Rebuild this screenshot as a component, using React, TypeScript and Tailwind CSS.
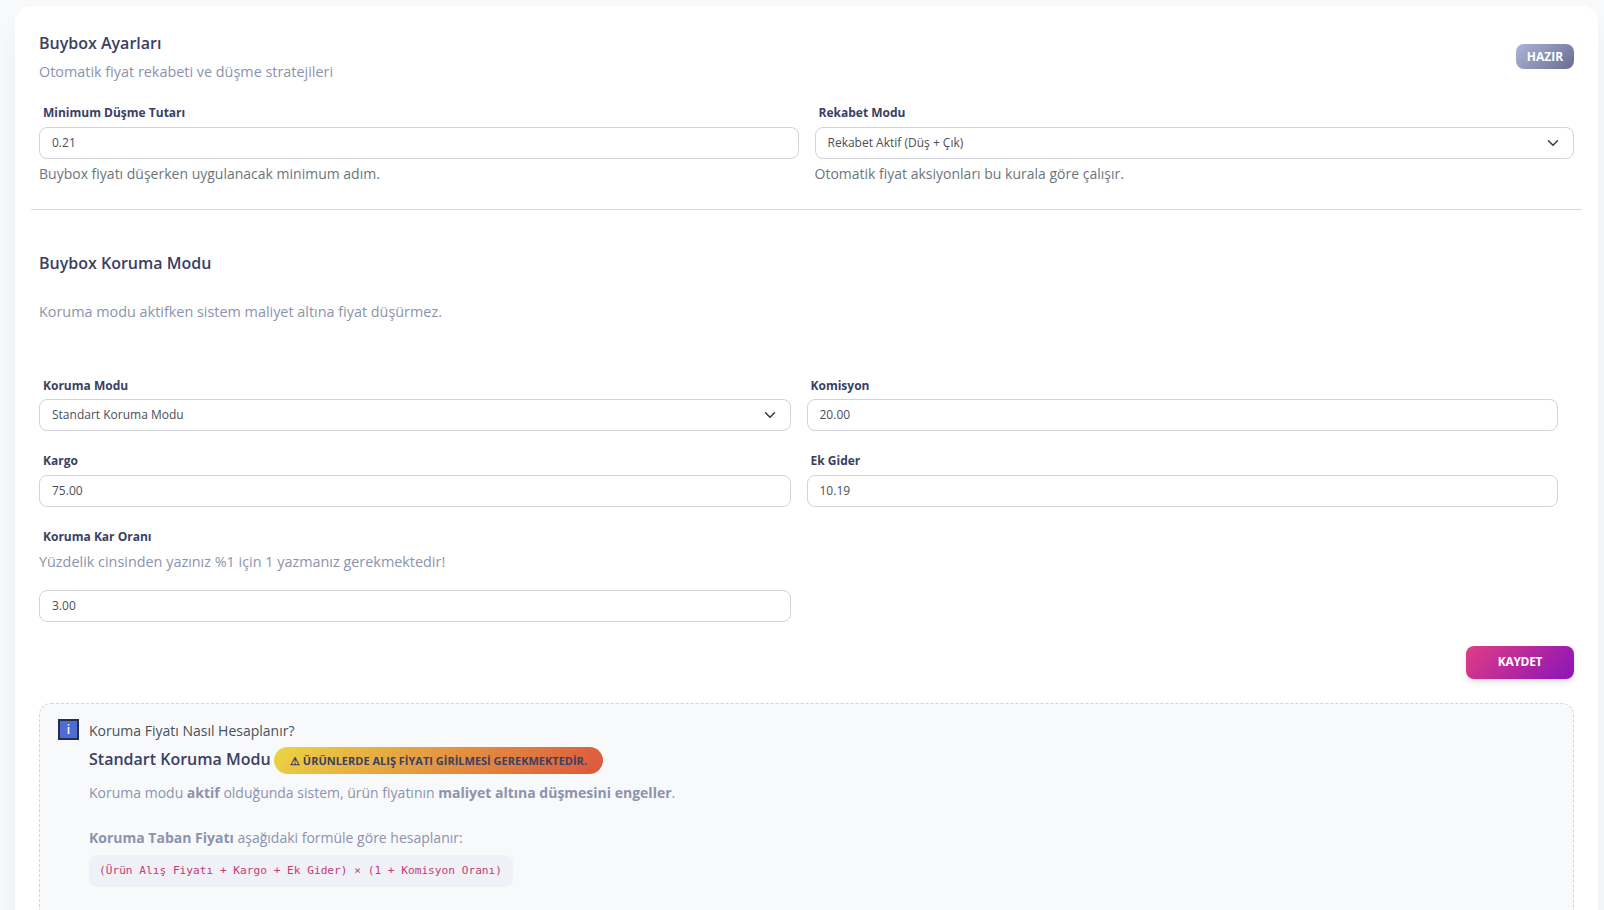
import type { ReactNode } from "react";

const fieldCls =
  "block h-8 w-full appearance-none rounded-lg border border-[#d2d3da] bg-white px-3 text-[12px] leading-[18px] text-[#495057] outline-none";

function Label({ children }: { children: ReactNode }) {
  return (
    <label className="ml-1 block pt-px text-[12px] leading-[17px] font-bold text-[#3a4063]">
      {children}
    </label>
  );
}

function TextInput({ value }: { value: string }) {
  return <input className={`${fieldCls} pb-0.5`} defaultValue={value} />;
}

function Select({ value }: { value: string }) {
  return (
    <div className="relative">
      <select className={fieldCls} defaultValue={value}>
        <option>{value}</option>
      </select>
      <svg
        className="pointer-events-none absolute top-2.5 right-[13px] h-3 w-4"
        viewBox="0 0 16 16"
        fill="none"
        stroke="#343a40"
        strokeWidth="2"
        strokeLinecap="round"
        strokeLinejoin="round"
      >
        <path d="m2 5 6 6 6-6" />
      </svg>
    </div>
  );
}

export default function App() {
  return (
    <div className="h-[910px] overflow-hidden bg-[#f8f9fa] pt-1.5 pr-1.5 pl-[15px] font-['Open_Sans',sans-serif]">
      <main className="h-[1100px] rounded-2xl bg-white px-6 pt-6 shadow-[0_20px_27px_0_rgba(0,0,0,0.05)]">
        <header className="flex items-start justify-between">
          <div>
            <h2 className="text-[16px] leading-[26px] font-semibold text-[#3a4063]">Buybox Ayarları</h2>
            <p className="mt-[5px] text-[14.4px] leading-[22px] text-[#8c93ac]">
              Otomatik fiyat rekabeti ve düşme stratejileri
            </p>
          </div>
          <span className="mt-3.5 flex h-[25px] w-[58px] items-center justify-center rounded-lg bg-linear-[135deg,#aeb4d8,#676e92] text-[12px] leading-none font-bold text-white">
            HAZIR
          </span>
        </header>

        <section className="mt-5 grid grid-cols-2 gap-4">
          <div>
            <Label>Minimum Düşme Tutarı</Label>
            <div className="mt-1.5">
              <TextInput value="0.21" />
            </div>
            <p className="mt-1 text-[14px] leading-[22px] text-[#6c757d]">
              Buybox fiyatı düşerken uygulanacak minimum adım.
            </p>
          </div>
          <div>
            <Label>Rekabet Modu</Label>
            <div className="mt-1.5">
              <Select value="Rekabet Aktif (Düş + Çık)" />
            </div>
            <p className="mt-1 text-[14px] leading-[22px] text-[#6c757d]">
              Otomatik fiyat aksiyonları bu kurala göre çalışır.
            </p>
          </div>
        </section>

        <hr className="-mx-2 mt-6 border-[#d9dadf]" />

        <h2 className="mt-10 text-[16px] leading-[26px] font-semibold text-[#3a4063]">
          Buybox Koruma Modu
        </h2>
        <p className="mt-[25px] text-[14.4px] leading-[22px] text-[#8c93ac]">
          Koruma modu aktifken sistem maliyet altına fiyat düşürmez.
        </p>

        <section className="mt-[53px] mr-4 grid grid-cols-2 gap-x-4 gap-y-5">
          <div className="flex flex-col gap-[5px]">
            <Label>Koruma Modu</Label>
            <Select value="Standart Koruma Modu" />
          </div>
          <div className="flex flex-col gap-[5px]">
            <Label>Komisyon</Label>
            <TextInput value="20.00" />
          </div>
          <div className="flex flex-col gap-1.5">
            <Label>Kargo</Label>
            <TextInput value="75.00" />
          </div>
          <div className="flex flex-col gap-1.5">
            <Label>Ek Gider</Label>
            <TextInput value="10.19" />
          </div>
          <div>
            <Label>Koruma Kar Oranı</Label>
            <p className="mt-1.5 mb-[17px] text-[14.4px] leading-[22px] text-[#8c93ac]">
              Yüzdelik cinsinden yazınız %1 için 1 yazmanız gerekmektedir!
            </p>
            <TextInput value="3.00" />
          </div>
        </section>

        <div className="mt-6 flex justify-end">
          <button className="h-[33px] w-[108px] rounded-lg bg-linear-[135deg,#e03d84,#8b14b8] pb-0.5 text-[12px] font-bold tracking-[-0.3px] text-white shadow-[0_4px_7px_-1px_rgba(0,0,0,0.11),0_2px_4px_-1px_rgba(0,0,0,0.07)]">
            KAYDET
          </button>
        </div>

        <section className="mt-6 flex h-[400px] rounded-xl border border-dashed border-[#d2d6da] bg-[#f8f9fb] pt-[15px] pl-[18px]">
          <span className="flex size-[21px] shrink-0 items-center justify-center border-2 border-[#262e48] bg-[#4f6bd5] text-[12px] leading-none font-semibold text-white">
            i
          </span>
          <div className="ml-2.5 pt-px">
            <p className="text-[14px] leading-[22px] text-[#495057]">Koruma Fiyatı Nasıl Hesaplanır?</p>
            <div className="mt-[5px] flex h-[27px] items-center">
              <h3 className="-mt-1 w-[181px] text-[16px] leading-[26px] font-semibold whitespace-nowrap text-[#3a4063]">
                Standart Koruma Modu
              </h3>
              <span className="ml-1 flex h-[27px] w-[329px] items-center justify-center rounded-full bg-linear-[135deg,#ecd543,#dc573d] text-[11px] leading-none font-bold whitespace-nowrap text-[#3a4063]">
                ⚠ ÜRÜNLERDE ALIŞ FİYATI GİRİLMESİ GEREKMEKTEDİR.
              </span>
            </div>
            <p className="mt-2 text-[14px] leading-[22px] text-[#8c93ac]">
              Koruma modu <b>aktif</b> olduğunda sistem, ürün fiyatının{" "}
              <b>maliyet altına düşmesini engeller</b>.
            </p>
            <p className="mt-[23px] text-[14px] leading-[22px] text-[#8c93ac]">
              <b>Koruma Taban Fiyatı</b> aşağıdaki formüle göre hesaplanır:
            </p>
            <code className="mt-1.5 flex h-8 w-[424px] items-center rounded-lg bg-[#f0f1f6] pl-2.5 font-['DejaVu_Sans_Mono',monospace] text-[11.17px] whitespace-nowrap text-[#c23a7a]">
              (Ürün Alış Fiyatı + Kargo + Ek Gider) × (1 + Komisyon Oranı)
            </code>
          </div>
        </section>
      </main>
    </div>
  );
}
